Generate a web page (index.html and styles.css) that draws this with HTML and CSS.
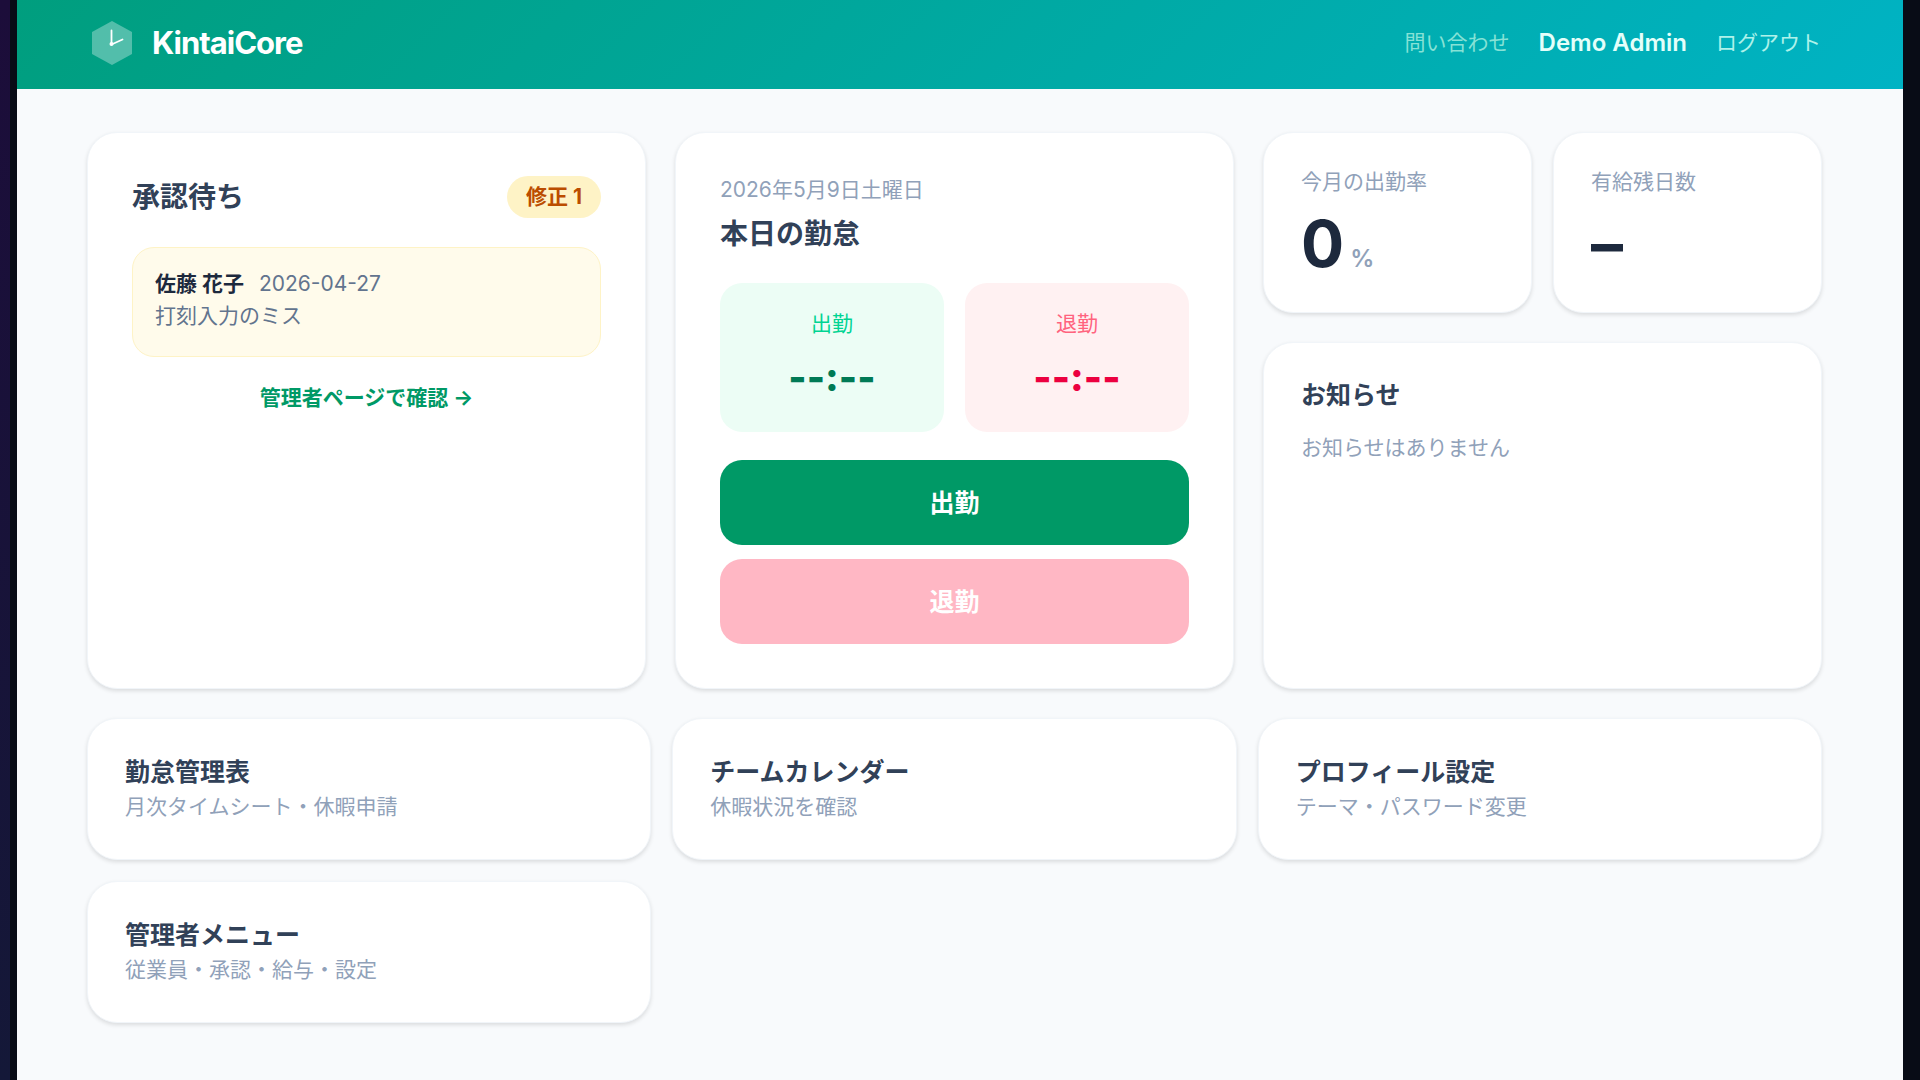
FILE: index.html
```html
<!DOCTYPE html>
<html lang="ja">
  <head>
    <meta charset="UTF-8" />
    <meta name="viewport" content="width=device-width, initial-scale=1.0" />
    <title>KintaiCore</title>
    <link rel="stylesheet" href="styles.css">
  </head>
  <body>
    <div class="screen">
      <header class="header">
        <a class="brand" href="#">
          <svg class="logo" viewBox="0 0 48 48" aria-hidden="true">
            <path d="M24 2 44 13v22L24 46 4 35V13z" fill="#fff" fill-opacity="0.32" />
            <path d="M23.5 11.5v14l11-5" fill="none" stroke="#fff" stroke-width="1.8" stroke-linecap="round" stroke-linejoin="round" />
            <circle cx="23.5" cy="25" r="2" fill="#fff" />
          </svg>
          <span>KintaiCore</span>
        </a>
        <nav class="nav">
          <a class="contact" href="#">問い合わせ</a>
          <span class="user">Demo Admin</span>
          <button class="logout" type="button">ログアウト</button>
        </nav>
      </header>

      <main class="main">
        <div class="top">
          <section class="card approval">
            <div class="approval-head">
              <h2>承認待ち</h2>
              <span class="badge">修正 1</span>
            </div>
            <div class="request">
              <p><strong>佐藤 花子</strong><time datetime="2026-04-27">2026-04-27</time></p>
              <p>打刻入力のミス</p>
            </div>
            <a class="admin-link" href="#">管理者ページで確認 →</a>
          </section>

          <section class="card today">
            <p class="muted">2026年5月9日土曜日</p>
            <h2>本日の勤怠</h2>
            <div class="times">
              <div class="time in">
                <p>出勤</p>
                <strong>--:--</strong>
              </div>
              <div class="time out">
                <p>退勤</p>
                <strong>--:--</strong>
              </div>
            </div>
            <div class="buttons">
              <button class="btn btn-in" type="button">出勤</button>
              <button class="btn btn-out" type="button" disabled>退勤</button>
            </div>
          </section>

          <div class="side">
            <div class="stats">
              <section class="card stat">
                <p class="muted">今月の出勤率</p>
                <p class="value"><span>0</span><small>%</small></p>
              </section>
              <section class="card stat">
                <p class="muted">有給残日数</p>
                <p class="value"><span>–</span></p>
              </section>
            </div>
            <section class="card news">
              <h3>お知らせ</h3>
              <p class="muted">お知らせはありません</p>
            </section>
          </div>
        </div>

        <div class="menu">
          <a class="card menu-item" href="#">
            <h3>勤怠管理表</h3>
            <p class="muted">月次タイムシート・休暇申請</p>
          </a>
          <a class="card menu-item" href="#">
            <h3>チームカレンダー</h3>
            <p class="muted">休暇状況を確認</p>
          </a>
          <a class="card menu-item" href="#">
            <h3>プロフィール設定</h3>
            <p class="muted">テーマ・パスワード変更</p>
          </a>
          <a class="card menu-item" href="#">
            <h3>管理者メニュー</h3>
            <p class="muted">従業員・承認・給与・設定</p>
          </a>
        </div>
      </main>
    </div>
  </body>
</html>
```

FILE: styles.css
```css
* {
  box-sizing: border-box;
  margin: 0;
  padding: 0;
}
body {
  padding-left: 10px;
  background: linear-gradient(#1c0d3a, #141838);
  font-family: Inter, "Noto Sans CJK JP", sans-serif;
  font-size: 21px;
  line-height: 32px;
  color: #1d293d;
}
a {
  color: inherit;
  text-decoration: none;
}
button {
  border: none;
  font-family: inherit;
  cursor: pointer;
}
h2 {
  font-size: 28px;
  line-height: 42px;
  color: #314158;
}
h3 {
  font-size: 25px;
  line-height: 37px;
  color: #314158;
}
.screen {
  min-height: 100vh;
  border-left: 7px solid #080c16;
  border-right: 17px solid #080c16;
  background-color: #f8fafc;
}

/* header */
.header {
  display: flex;
  justify-content: space-between;
  align-items: center;
  height: 89px;
  padding: 0 82px 4px 71px;
  background: linear-gradient(135deg, #009e7e, #00b3c4);
}
.brand {
  display: flex;
  align-items: center;
  gap: 16px;
  color: white;
  font-size: 31px;
  font-weight: 700;
  letter-spacing: -1px;
}
.logo {
  width: 48px;
  height: 48px;
}
.nav {
  display: flex;
  align-items: center;
  gap: 29px;
}
.contact {
  color: #86e2d6;
}
.user {
  color: #e4fffa;
  font-size: 24px;
  font-weight: 600;
}
.logout {
  background: none;
  color: #aef2ea;
  font-size: 21px;
  line-height: 30px;
}

/* cards */
.main {
  padding: 43px 81px 43px 70px;
}
.card {
  background-color: white;
  border: 1px solid #f1f5f9;
  border-radius: 30px;
  box-shadow: 0 2px 4px rgba(0, 0, 0, 0.12);
}
.muted {
  color: #90a1b9;
}
.top {
  display: grid;
  grid-template-columns: repeat(3, 1fr);
  gap: 29px;
}
.approval,
.today {
  padding: 43px 44px 44px;
}
.approval-head {
  display: flex;
  justify-content: space-between;
  align-items: center;
  margin-bottom: 29px;
}
.badge {
  padding: 5px 19px;
  border-radius: 21px;
  background-color: #fef3c6;
  color: #bb4d00;
  font-weight: 700;
}
.request {
  padding: 20px 22px 24px;
  border: 1px solid #fef3c6;
  border-radius: 22px;
  background-color: #fffbeb;
  color: #62748e;
}
.request strong {
  margin-right: 15px;
  color: #1d293d;
}
.admin-link {
  display: block;
  margin-top: 25px;
  text-align: center;
  color: #009966;
  font-weight: 700;
}

.today {
  padding-top: 41px;
}
.today h2 {
  margin-top: 7px;
}
.times {
  display: grid;
  grid-template-columns: 1fr 1fr;
  gap: 21px;
  margin-top: 28px;
}
.time {
  padding: 25px 20px 27px;
  border-radius: 22px;
  text-align: center;
}
.time strong {
  display: block;
  margin-top: 9px;
  font-size: 39px;
  font-weight: 800;
  line-height: 56px;
}
.in {
  background-color: #ecfdf5;
  color: #00d492;
}
.in strong {
  color: #007a55;
}
.out {
  background-color: #fff1f2;
  color: #ff637e;
}
.out strong {
  color: #ec003f;
}
.buttons {
  display: grid;
  gap: 14px;
  margin-top: 28px;
}
.btn {
  height: 85px;
  padding-bottom: 4px;
  border-radius: 22px;
  color: white;
  font-size: 25px;
  font-weight: 700;
}
.btn-in {
  background-color: #009966;
}
.btn-out {
  background-color: #ffb7c4;
}

.side {
  display: flex;
  flex-direction: column;
  gap: 29px;
}
.stats {
  display: grid;
  grid-template-columns: 1fr 1fr;
  gap: 21px;
}
.stat {
  padding: 33px 37px 31px;
}
.value {
  display: flex;
  align-items: baseline;
  gap: 6px;
  margin-top: 9px;
  font-size: 64px;
  font-weight: 700;
  line-height: 74px;
}
.value small {
  color: #90a1b9;
  font-size: 24px;
  font-weight: 600;
  line-height: 32px;
}
.news {
  flex: 1;
  padding: 34px 37px;
}
.news .muted {
  margin-top: 18px;
}

/* bottom menu */
.menu {
  display: grid;
  grid-template-columns: repeat(3, 1fr);
  gap: 21px;
  margin-top: 29px;
}
.menu-item {
  padding: 35px 37px 36px;
}
```
